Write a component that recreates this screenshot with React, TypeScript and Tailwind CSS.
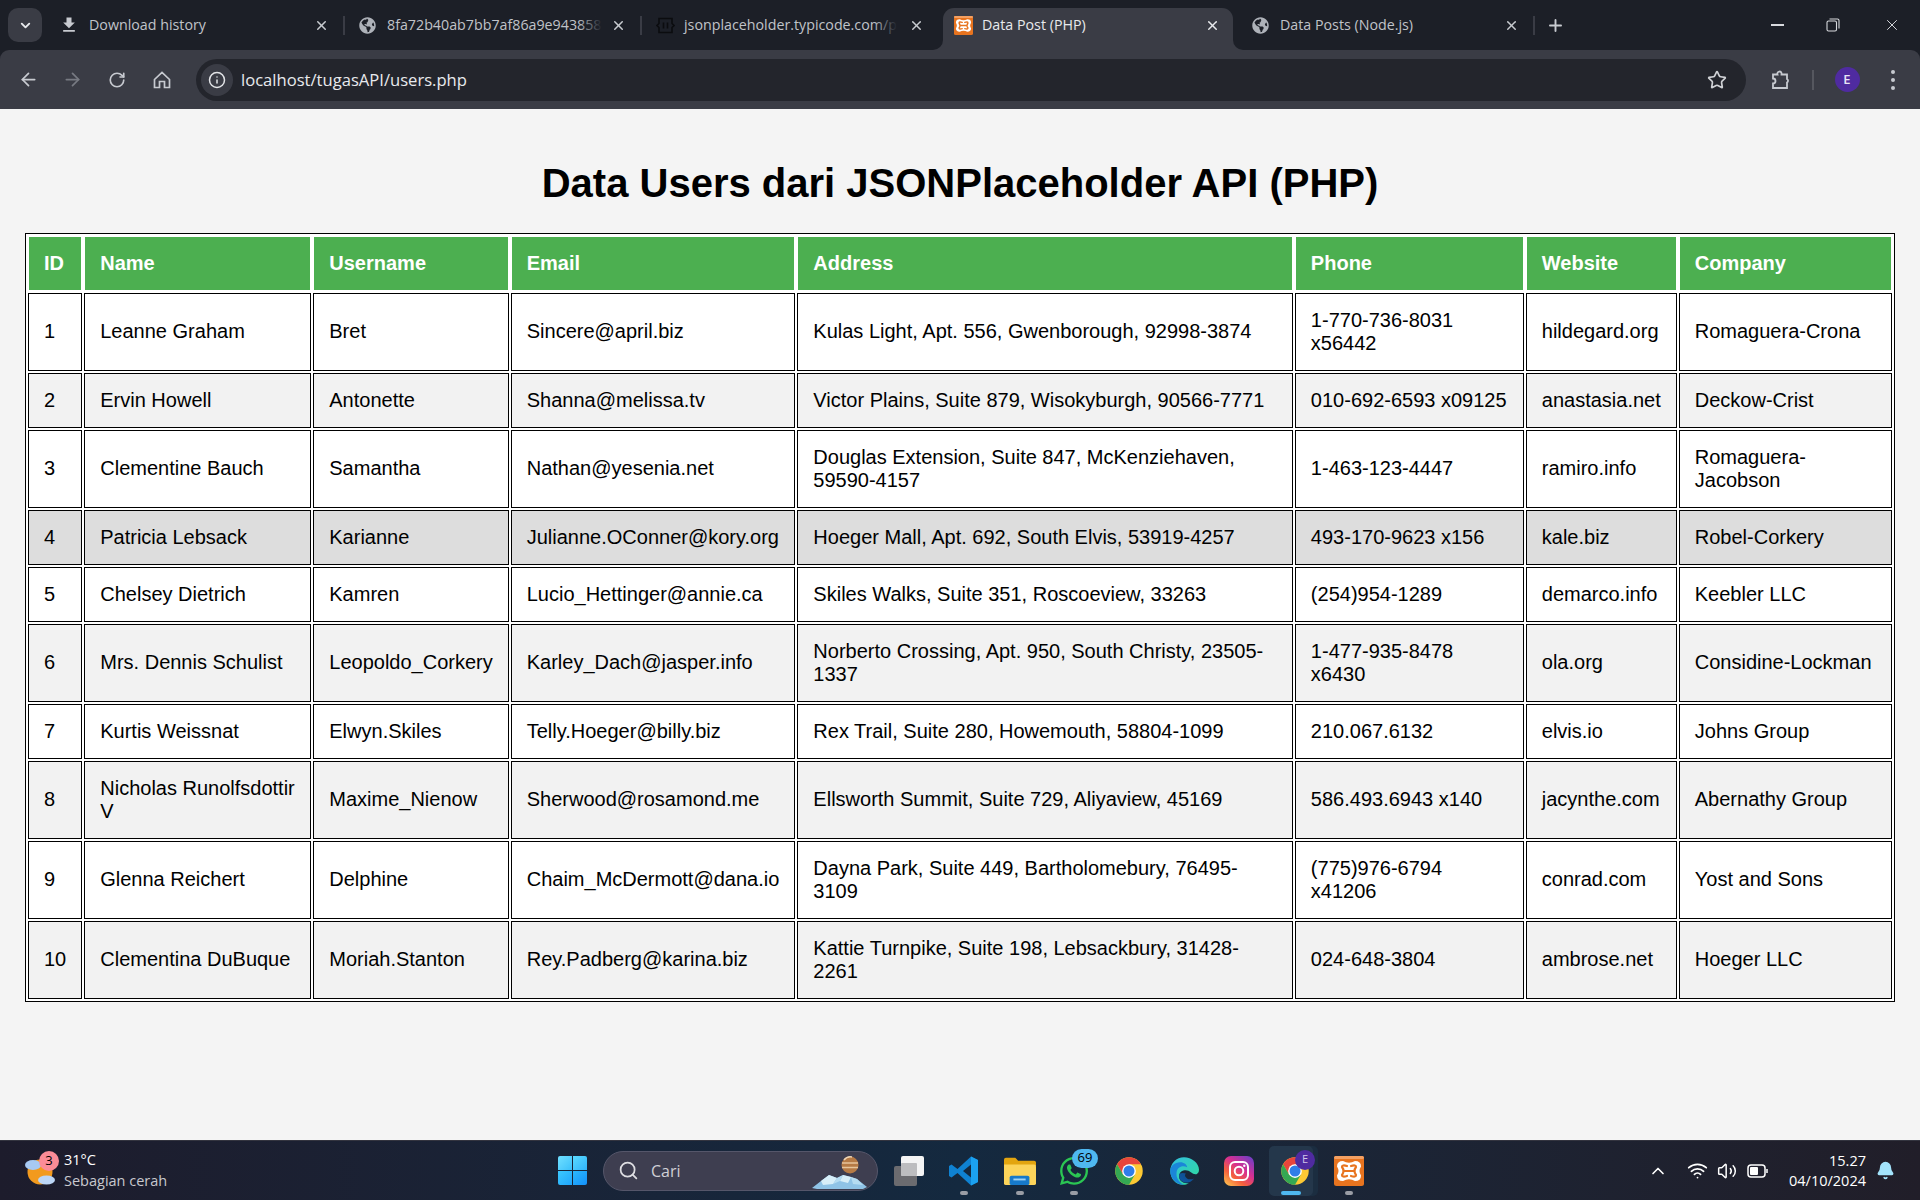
import React from "react";
import { ArrowLeft, ArrowRight, RotateCw, Info, Star, X, Plus, ChevronDown, ChevronUp, Search, Wifi, Volume2, Bell } from "lucide-react";
import { FaGlobeAmericas, FaWhatsapp } from "react-icons/fa";
import { MdFileDownload } from "react-icons/md";

const rows = [
  ["1", "Leanne Graham", "Bret", "Sincere@april.biz", "Kulas Light, Apt. 556, Gwenborough, 92998-3874", "1-770-736-8031 x56442", "hildegard.org", "Romaguera-Crona"],
  ["2", "Ervin Howell", "Antonette", "Shanna@melissa.tv", "Victor Plains, Suite 879, Wisokyburgh, 90566-7771", "010-692-6593 x09125", "anastasia.net", "Deckow-Crist"],
  ["3", "Clementine Bauch", "Samantha", "Nathan@yesenia.net", "Douglas Extension, Suite 847, McKenziehaven, 59590-4157", "1-463-123-4447", "ramiro.info", "Romaguera-Jacobson"],
  ["4", "Patricia Lebsack", "Karianne", "Julianne.OConner@kory.org", "Hoeger Mall, Apt. 692, South Elvis, 53919-4257", "493-170-9623 x156", "kale.biz", "Robel-Corkery"],
  ["5", "Chelsey Dietrich", "Kamren", "Lucio_Hettinger@annie.ca", "Skiles Walks, Suite 351, Roscoeview, 33263", "(254)954-1289", "demarco.info", "Keebler LLC"],
  ["6", "Mrs. Dennis Schulist", "Leopoldo_Corkery", "Karley_Dach@jasper.info", "Norberto Crossing, Apt. 950, South Christy, 23505-1337", "1-477-935-8478 x6430", "ola.org", "Considine-Lockman"],
  ["7", "Kurtis Weissnat", "Elwyn.Skiles", "Telly.Hoeger@billy.biz", "Rex Trail, Suite 280, Howemouth, 58804-1099", "210.067.6132", "elvis.io", "Johns Group"],
  ["8", "Nicholas Runolfsdottir V", "Maxime_Nienow", "Sherwood@rosamond.me", "Ellsworth Summit, Suite 729, Aliyaview, 45169", "586.493.6943 x140", "jacynthe.com", "Abernathy Group"],
  ["9", "Glenna Reichert", "Delphine", "Chaim_McDermott@dana.io", "Dayna Park, Suite 449, Bartholomebury, 76495-3109", "(775)976-6794 x41206", "conrad.com", "Yost and Sons"],
  ["10", "Clementina DuBuque", "Moriah.Stanton", "Rey.Padberg@karina.biz", "Kattie Turnpike, Suite 198, Lebsackbury, 31428-2261", "024-648-3804", "ambrose.net", "Hoeger LLC"],
];
const heads = ["ID", "Name", "Username", "Email", "Address", "Phone", "Website", "Company"];

function Chrome({ size = 30 }: { size?: number }) {
  return (
    <svg width={size} height={size} viewBox="0 0 48 48">
      <circle cx="24" cy="24" r="22" fill="#fcc934" />
      <path d="M43.050 13A22 22 0 0 0 4.950 13L14.470 29.500 24 13z" fill="#e8453c" />
      <path d="M4.950 13A22 22 0 0 0 24 46L33.530 29.500 14.470 29.500z" fill="#34a853" />
      <circle cx="24" cy="24" r="11" fill="#fff" />
      <circle cx="24" cy="24" r="8.800" fill="#2f7de8" />
    </svg>
  );
}

function Edge() {
  return (
    <svg width="30" height="30" viewBox="0 0 48 48">
      <defs>
        <linearGradient id="edgeA" x1="0" y1="1" x2="1" y2="0">
          <stop offset="0" stopColor="#0c59a4" />
          <stop offset="1" stopColor="#114a8b" />
        </linearGradient>
        <linearGradient id="edgeB" x1="0" y1="0" x2="1" y2="1">
          <stop offset="0" stopColor="#33bfe0" />
          <stop offset="1" stopColor="#2fdc9a" />
        </linearGradient>
      </defs>
      <path d="M24 2C12 2 2 12 2 24c0 12 9 22 20 22 4 0 7-1 10-3-8 2-16-3-16-11 0-4 3-8 7-9 5-1 9 0 12 3 3 2 6 4 9 3 2-1 4-3 4-7C48 11 36 2 24 2z" fill="url(#edgeB)" />
      <path d="M2 24c0-8 7-14 16-14 6 0 11 4 11 8-6-3-17-2-17 11 0 7 5 14 12 17C12 46 2 36 2 24z" fill="#1b86d8" />
      <path d="M16 31c0 8 8 13 16 11 3-1 6-3 8-6-3 2-9 2-12-1-3-2-3-5-1-7-5-2-11-1-11 3z" fill="url(#edgeA)" />
    </svg>
  );
}

function Instagram() {
  return (
    <svg width="30" height="30" viewBox="0 0 30 30">
      <defs>
        <linearGradient id="ig" x1="0.1" y1="1" x2="0.9" y2="0">
          <stop offset="0" stopColor="#fdc04e" />
          <stop offset="0.3" stopColor="#f5603c" />
          <stop offset="0.6" stopColor="#d62f92" />
          <stop offset="1" stopColor="#6d3fc8" />
        </linearGradient>
      </defs>
      <rect width="30" height="30" rx="7" fill="url(#ig)" />
      <rect x="6" y="6" width="18" height="18" rx="5" fill="none" stroke="#fff" strokeWidth="2" />
      <circle cx="15" cy="15" r="4.300" fill="none" stroke="#fff" strokeWidth="2" />
      <circle cx="20.300" cy="9.700" r="1.200" fill="#fff" />
    </svg>
  );
}

function Xampp({ size = 30 }: { size?: number }) {
  return (
    <svg width={size} height={size} viewBox="0 0 30 30">
      <rect width="30" height="30" rx="2.500" fill="#e8741f" />
      <rect width="30" height="3" rx="1.500" fill="#f4a062" />
      <path d="M9 5Q15 8.500 21 5Q27 5 27 10.500Q24 15 27 19.500Q27 25 21 25Q15 21.500 9 25Q3 25 3 19.500Q6 15 3 10.500Q3 5 9 5z" fill="#fff" />
      <path d="M13 10Q8 8.500 8 11Q11 15 8 19Q8 21.500 13 20M17 10Q22 8.500 22 11Q19 15 22 19Q22 21.500 17 20M11 15H19" fill="none" stroke="#e8741f" strokeWidth="2.200" strokeLinecap="round" />
    </svg>
  );
}

function Tab({ icon, title, active, fade, width }: { icon: React.ReactNode; title: string; active?: boolean; fade?: boolean; width: string }) {
  return (
    <div className={`relative flex h-[42px] shrink-0 items-center self-end pb-[8px] ${width} ${active ? "mx-[5px] rounded-t-[11px] bg-[#3a3c45] pl-[11px] pr-[13px] text-[#e8eaed]" : "pl-[14px] pr-[14px] text-[#c0c3c9]"}`}>
      {active && (
        <>
          <span className="absolute bottom-0 left-[-10px] h-[10px] w-[10px] bg-[#3a3c45]">
            <span className="block h-full w-full rounded-br-[10px] bg-[#1c1f27]" />
          </span>
          <span className="absolute bottom-0 right-[-10px] h-[10px] w-[10px] bg-[#3a3c45]">
            <span className="block h-full w-full rounded-bl-[10px] bg-[#1c1f27]" />
          </span>
        </>
      )}
      <span className="flex w-[28px] shrink-0 items-center justify-start">{icon}</span>
      <span className="relative min-w-0 flex-1 whitespace-nowrap text-[14.25px] leading-[20px]">
        <span className="relative inline-block">
          {title}
          {fade && <span className="absolute inset-y-0 right-0 w-[24px] bg-gradient-to-r from-transparent to-[#1c1f27]" />}
        </span>
      </span>
      <X size={15} strokeWidth={2.4} className={active ? "shrink-0 text-[#e8eaed]" : "shrink-0 text-[#c8cbd0]"} />
    </div>
  );
}

function Sep() {
  return <div className="h-[19px] w-[2px] shrink-0 self-center bg-[#3a3c45]" />;
}

function TaskIcon({ children, dot, className }: { children: React.ReactNode; dot?: boolean; className?: string }) {
  return (
    <div className={`relative flex h-[50px] items-center justify-center ${className ?? ""}`}>
      {children}
      {dot && <span className="absolute bottom-[1px] left-1/2 h-[4px] w-[8px] -translate-x-1/2 rounded-full bg-[#9a9da5]" />}
    </div>
  );
}

export default function App() {
  return (
    <div className="flex h-screen w-full flex-col overflow-hidden bg-[#f4f4f4] font-['Liberation_Sans',Arial,sans-serif]">
      <div className="shrink-0 bg-[#1c1f27] font-['Open_Sans',sans-serif]">
        {/* tab strip */}
        <div className="flex h-[50px] items-center">
          <div className="ml-[8px] mr-[5px] flex h-[34px] w-[34px] shrink-0 items-center justify-center rounded-[10px] bg-[#3a3c45] text-[#e8eaed]">
            <ChevronDown size={15} strokeWidth={3} />
          </div>
          <div className="flex h-[50px] items-center">
            <Tab width="w-[296px]" icon={<MdFileDownload size={20} className="-ml-[2px] text-[#c7cad0]" />} title="Download history" />
            <Sep />
            <Tab width="w-[295px]" icon={<FaGlobeAmericas size={17} className="text-[#aeb2b9]" />} title="8fa72b40ab7bb7af86a9e943858" fade />
            <Sep />
            <Tab
              width="w-[296px]"
              icon={
                <svg width="19" height="17" viewBox="0 0 19 17" fill="none" stroke="#0b0c0f" strokeWidth="1.600">
                  <path d="M5 1.500H3v5l-2 2 2 2v5h2M14 1.500h2v5l2 2-2 2v5h-2M7.500 5.500v6M11.500 5.500v6M3 1.500h13M3 15.500h13" />
                </svg>
              }
              title="jsonplaceholder.typicode.com/p"
              fade
            />
            <Tab active width="w-[290px]" icon={<Xampp size={19} />} title="Data Post (PHP)" />
            <Tab width="w-[295px]" icon={<FaGlobeAmericas size={17} className="text-[#aeb2b9]" />} title="Data Posts (Node.js)" />
            <Sep />
          </div>
          <div className="ml-[11px] text-[#c8cbd0]">
            <Plus size={19} strokeWidth={2.4} />
          </div>
          <div className="ml-auto flex items-center text-[#d8dade]">
            <span className="flex w-[52px] justify-center">
              <span className="h-[1.500px] w-[13px] bg-[#d8dade]" />
            </span>
            <span className="flex w-[60px] justify-center">
              <svg width="14" height="14" viewBox="0 0 14 14" fill="none" stroke="#d8dade" strokeWidth="1.100">
                <rect x="1" y="3" width="9.500" height="10" rx="1.500" />
                <path d="M3.500 1h8a1.500 1.500 0 0 1 1.500 1.500v8" />
              </svg>
            </span>
            <span className="flex w-[57px] justify-center">
              <X size={18} strokeWidth={1.300} />
            </span>
          </div>
        </div>

        {/* toolbar */}
        <div className="flex h-[59px] items-center rounded-t-[9px] bg-[#3a3c45] text-[#c7cad0]">
          <ArrowLeft size={21} strokeWidth={2} className="ml-[18px]" />
          <ArrowRight size={21} strokeWidth={2} className="ml-[23px] text-[#777a82]" />
          <RotateCw size={18} strokeWidth={2.200} className="ml-[25px]" />
          <svg width="20" height="20" viewBox="0 0 20 20" fill="none" stroke="currentColor" strokeWidth="1.700" className="ml-[26px]">
            <path d="M2.500 9.500 10 2.500l7.500 7v8h-5v-6h-5v6h-5z" />
          </svg>
          <div className="ml-[24px] flex h-[42px] w-[1550px] shrink-0 items-center rounded-full bg-[#23252c] pl-[5px] pr-[19px]">
            <span className="flex h-[32px] w-[32px] items-center justify-center rounded-full bg-[#3a3c45] text-[#e3e5e8]">
              <Info size={18} strokeWidth={2} />
            </span>
            <span className="ml-[8px] text-[16.6px] leading-[24px] text-[#e8eaed]">localhost/tugasAPI/users.php</span>
            <Star size={20} strokeWidth={2} className="ml-auto text-[#d0d2d6]" />
          </div>
          <svg width="22" height="22" viewBox="0 0 22 22" fill="none" stroke="#c7cad0" strokeWidth="1.800" className="ml-[24px]">
            <path d="M3 5.500h4.500a2 2 0 0 1 4-1.500v1.500H17v4.500a2 2 0 0 1 0 3.500V19H3v-4.500a2.500 2.500 0 0 0 0-5z" />
          </svg>
          <span className="ml-[20px] h-[20px] w-[1.500px] bg-[#55575f]" />
          <span className="ml-[21px] flex h-[25px] w-[25px] items-center justify-center rounded-full bg-[#4f2ba0] text-[13px] font-semibold text-[#e8e4f5]">E</span>
          <span className="ml-[31px] flex flex-col gap-[4px]">
            <span className="h-[4px] w-[4px] rounded-full bg-[#c7cad0]" />
            <span className="h-[4px] w-[4px] rounded-full bg-[#c7cad0]" />
            <span className="h-[4px] w-[4px] rounded-full bg-[#c7cad0]" />
          </span>
        </div>
      </div>

      {/* page */}
      <div className="min-h-0 flex-1 px-[25px] pt-[24px] text-black">
        <h1 className="my-[26.8px] text-center text-[40px] font-bold leading-[46px]">Data Users dari JSONPlaceholder API (PHP)</h1>
        <table className="w-full border-separate border-spacing-[2px] border border-black bg-white text-[20px] leading-[23px]">
          <thead>
            <tr>
              {heads.map((h) => (
                <th key={h} className="border border-white bg-[#4caf50] p-[15px] text-left font-bold text-white">{h}</th>
              ))}
            </tr>
          </thead>
          <tbody>
            {rows.map((r, i) => (
              <tr key={r[0]} className={i === 3 ? "bg-[#dddddd]" : i % 2 === 1 ? "bg-[#f2f2f2]" : "bg-white"}>
                {r.map((c, j) => (
                  <td key={j} className="border border-black p-[15px] text-left">{c}</td>
                ))}
              </tr>
            ))}
          </tbody>
        </table>
      </div>

      {/* taskbar */}
      <div className="flex h-[60px] shrink-0 items-center border-t border-[#33343f] bg-gradient-to-r from-[#1d1c2c] via-[#14293f] to-[#211e29] font-['Open_Sans',sans-serif] text-white">
        <div className="flex w-[558px] shrink-0 items-center pl-[25px]">
          <div className="relative h-[28px] w-[30px]">
            <svg width="30" height="28" viewBox="0 0 30 28">
              <circle cx="15" cy="15" r="12.500" fill="#f29a1e" />
              <ellipse cx="8" cy="8" rx="8" ry="5" fill="#a7c9f2" />
              <ellipse cx="21.500" cy="23" rx="8.500" ry="4.500" fill="#bcd6f6" />
            </svg>
            <span className="absolute left-[14px] top-[-6px] flex h-[20px] w-[20px] items-center justify-center rounded-full bg-[#fb8c97] text-[13px] leading-none text-black">3</span>
          </div>
          <div className="mb-[2px] ml-[9px] flex flex-col">
            <span className="text-[14.5px] leading-[21px]">31°C</span>
            <span className="text-[14.5px] leading-[21px] text-[#c8c9ce]">Sebagian cerah</span>
          </div>
        </div>
        <div className="grid h-[29px] w-[29px] shrink-0 grid-cols-2 gap-[1px]">
          <span className="rounded-tl-[2px] bg-gradient-to-br from-[#6fe0ff] to-[#39c0fb]" />
          <span className="rounded-tr-[2px] bg-gradient-to-br from-[#5adaff] to-[#30b4fb]" />
          <span className="rounded-bl-[2px] bg-gradient-to-br from-[#3cc8fd] to-[#1fa5fb]" />
          <span className="rounded-br-[2px] bg-gradient-to-br from-[#2cb8fc] to-[#1590fa]" />
        </div>
        <div className="relative ml-[16px] flex h-[40px] w-[275px] shrink-0 items-center rounded-full border border-[#55566a] bg-[#3e3e50] pl-[14px]">
          <Search size={21} strokeWidth={2} className="text-[#dedee2]" />
          <span className="ml-[12px] text-[16px] text-[#d0d0d6]">Cari</span>
          <svg width="60" height="38" viewBox="0 0 60 38" className="absolute bottom-0 right-[8px]">
            <path d="M3 36 12 29l8-6 8 3 6-3 8 2 6 2 10 8-4 2H8z" fill="#8fc3e6" />
            <path d="M12 29l8-6 8 3-4 6-10 1zM34 23l8 2-3 6-8-2z" fill="#d7eef8" />
            <path d="M28 26l6-3-3 6-7 3zM42 25l6 2 6 6-10-1z" fill="#b5dcf1" />
            <circle cx="41" cy="13" r="8.500" fill="#b57a45" />
            <path d="M33 11h16M33 15.500h16" stroke="#e6c49a" strokeWidth="1.500" />
            <path d="M35 8a8 8 0 0 1 8-3" stroke="#edd5b5" strokeWidth="1.500" fill="none" />
          </svg>
        </div>
        <TaskIcon className="ml-[16px] w-[30px]">
          <span className="relative block h-[30px] w-[30px]">
            <span className="absolute bottom-0 left-0 h-[20px] w-[23px] rounded-[2px] bg-[#6b6b6f]" />
            <span className="absolute right-0 top-0 h-[20px] w-[23px] rounded-[2px] bg-[#f4f4f4]" />
            <span className="absolute left-[7px] top-[7px] h-[13px] w-[16px] rounded-[1px] bg-[#bdbdbf]" />
          </span>
        </TaskIcon>
        <TaskIcon dot className="ml-[24px] w-[32px]">
          <svg width="32" height="32" viewBox="0 0 32 32">
            <path d="M23 1.500 30 5v22l-7 3.500L9.500 18 3.500 22.500 1 21v-10l2.500-1.500L9.500 14 23 1.500zm0 8L15 16l8 6.500z" fill="#0f82d2" />
            <path d="M23 1.500 30 5v22l-7 3.500z" fill="#1ba1f0" />
          </svg>
        </TaskIcon>
        <TaskIcon dot className="ml-[24px] w-[32px]">
          <svg width="34" height="30" viewBox="0 0 34 30">
            <path d="M0 3a2 2 0 0 1 2-2h10l3 3h17a2 2 0 0 1 2 2v4H0z" fill="#e3a50f" />
            <path d="M0 8h32a2 2 0 0 1 2 2v18a2 2 0 0 1-2 2H2a2 2 0 0 1-2-2z" fill="#fcd45a" />
            <rect x="6" y="20" width="21" height="10" rx="2" fill="#1779c9" />
            <rect x="10" y="23" width="13" height="2" fill="#9fd2f5" />
          </svg>
        </TaskIcon>
        <TaskIcon dot className="ml-[22px] w-[32px]">
          <FaWhatsapp size={32} className="text-[#2bc653]" />
          <span className="absolute right-[-8px] top-[3px] flex h-[19px] w-[26px] items-center justify-center rounded-full bg-[#4fb8f0] text-[13px] text-black">69</span>
        </TaskIcon>
        <TaskIcon className="ml-[24px] w-[30px]"><Chrome /></TaskIcon>
        <TaskIcon className="ml-[25px] w-[30px]"><Edge /></TaskIcon>
        <TaskIcon className="ml-[25px] w-[30px]"><Instagram /></TaskIcon>
        <TaskIcon className="ml-[15px] w-[44px] rounded-[5px] bg-[#24374b] shadow-[5px_0_0_0_#1b2d40]">
          <span className="ml-[7px] flex"><Chrome /></span>
          <span className="absolute right-[-2px] top-[4px] flex h-[20px] w-[20px] items-center justify-center rounded-full bg-[#4f2ba0] text-[11px] text-[#cfc6ea]">E</span>
          <span className="absolute bottom-[1px] left-1/2 h-[4px] w-[20px] -translate-x-1/2 rounded-full bg-[#4fb8f0]" />
        </TaskIcon>
        <TaskIcon dot className="ml-[21px] w-[30px]"><Xampp size={30} /></TaskIcon>
        <div className="ml-auto flex items-center pr-[26px]">
          <ChevronUp size={20} strokeWidth={2} className="mr-[19px]" />
          <Wifi size={21} strokeWidth={2} />
          <Volume2 size={20} strokeWidth={1.800} className="ml-[9px]" />
          <svg width="22" height="14" viewBox="0 0 22 14" className="ml-[10px]" fill="none" stroke="#fff" strokeWidth="1.500">
            <rect x="1" y="1" width="17" height="12" rx="3" />
            <rect x="3" y="3" width="8" height="8" rx="1" fill="#fff" stroke="none" />
            <path d="M20 5v4" />
          </svg>
          <div className="ml-[20px] flex flex-col items-end text-[14.5px] leading-[20px]">
            <span>15.27</span>
            <span>04/10/2024</span>
          </div>
          <Bell size={19} strokeWidth={2} fill="#a3e3fb" className="ml-[10px] mr-[-1px] text-[#a3e3fb]" />
        </div>
      </div>
    </div>
  );
}
